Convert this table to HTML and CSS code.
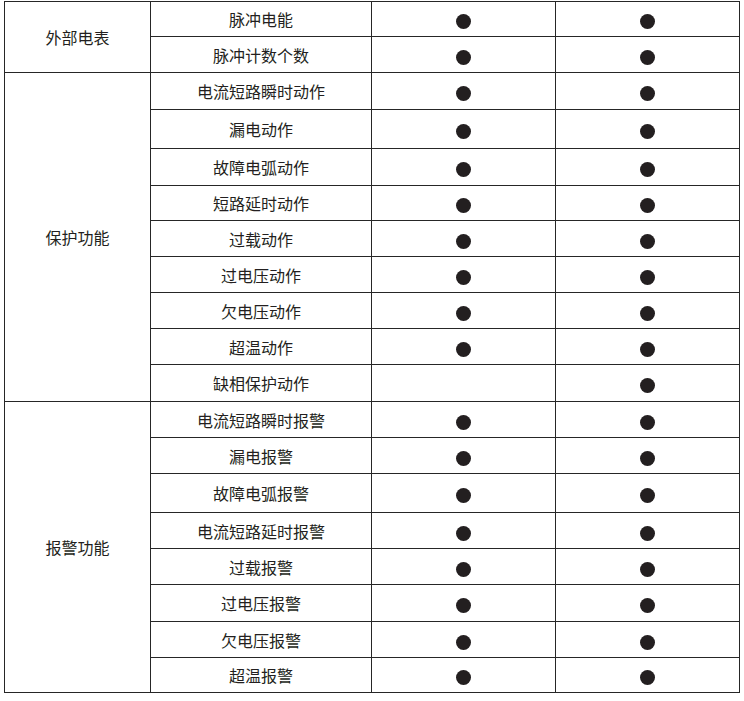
FILE: index.html
```html
<!DOCTYPE html>
<html lang="zh">
<head>
<meta charset="utf-8">
<link rel="stylesheet" href="styles.css">
</head>
<body>
<table class="spec">
  <colgroup>
    <col class="c1"><col class="c2"><col class="c3"><col class="c4">
  </colgroup>
  <tbody>
    <tr class="h35"><td rowspan="2" class="group">外部电表</td><td>脉冲电能</td><td><span class="dot"></span></td><td><span class="dot"></span></td></tr>
    <tr class="h36"><td>脉冲计数个数</td><td><span class="dot"></span></td><td><span class="dot"></span></td></tr>
    <tr class="h37"><td rowspan="9" class="group">保护功能</td><td>电流短路瞬时动作</td><td><span class="dot"></span></td><td><span class="dot"></span></td></tr>
    <tr class="h39"><td>漏电动作</td><td><span class="dot"></span></td><td><span class="dot"></span></td></tr>
    <tr class="h37"><td>故障电弧动作</td><td><span class="dot"></span></td><td><span class="dot"></span></td></tr>
    <tr class="h35"><td>短路延时动作</td><td><span class="dot"></span></td><td><span class="dot"></span></td></tr>
    <tr class="h36"><td>过载动作</td><td><span class="dot"></span></td><td><span class="dot"></span></td></tr>
    <tr class="h36"><td>过电压动作</td><td><span class="dot"></span></td><td><span class="dot"></span></td></tr>
    <tr class="h36"><td>欠电压动作</td><td><span class="dot"></span></td><td><span class="dot"></span></td></tr>
    <tr class="h36"><td>超温动作</td><td><span class="dot"></span></td><td><span class="dot"></span></td></tr>
    <tr class="h37"><td>缺相保护动作</td><td></td><td><span class="dot"></span></td></tr>
    <tr class="h36"><td rowspan="8" class="group">报警功能</td><td>电流短路瞬时报警</td><td><span class="dot"></span></td><td><span class="dot"></span></td></tr>
    <tr class="h36"><td>漏电报警</td><td><span class="dot"></span></td><td><span class="dot"></span></td></tr>
    <tr class="h39"><td>故障电弧报警</td><td><span class="dot"></span></td><td><span class="dot"></span></td></tr>
    <tr class="h36"><td>电流短路延时报警</td><td><span class="dot"></span></td><td><span class="dot"></span></td></tr>
    <tr class="h36"><td>过载报警</td><td><span class="dot"></span></td><td><span class="dot"></span></td></tr>
    <tr class="h37"><td>过电压报警</td><td><span class="dot"></span></td><td><span class="dot"></span></td></tr>
    <tr class="h36"><td>欠电压报警</td><td><span class="dot"></span></td><td><span class="dot"></span></td></tr>
    <tr class="h35"><td>超温报警</td><td><span class="dot"></span></td><td><span class="dot"></span></td></tr>
  </tbody>
</table>
</body>
</html>
```
FILE: styles.css
```css
html, body {
  margin: 0;
  padding: 0;
  background: #ffffff;
}
body {
  padding: 1px 0 0 4px;
  font-family: "Noto Sans CJK SC", "Noto Sans", sans-serif;
  color: #231f20;
}
.spec {
  border-collapse: collapse;
  table-layout: fixed;
  width: 735px;
}
.c1 { width: 146px; }
.c2 { width: 221px; }
.c3 { width: 184px; }
.c4 { width: 184px; }
.spec td {
  border: 1px solid #262626;
  text-align: center;
  vertical-align: middle;
  padding: 0;
  font-size: 16px;
  line-height: 20px;
}
.h35 td { height: 34px; }
.h36 td { height: 35px; }
.h37 td { height: 36px; }
.h39 td { height: 38px; }
.spec td.group { height: auto; }
.dot {
  display: inline-block;
  width: 15px;
  height: 15px;
  border-radius: 50%;
  background: #231f20;
  vertical-align: middle;
}
```
